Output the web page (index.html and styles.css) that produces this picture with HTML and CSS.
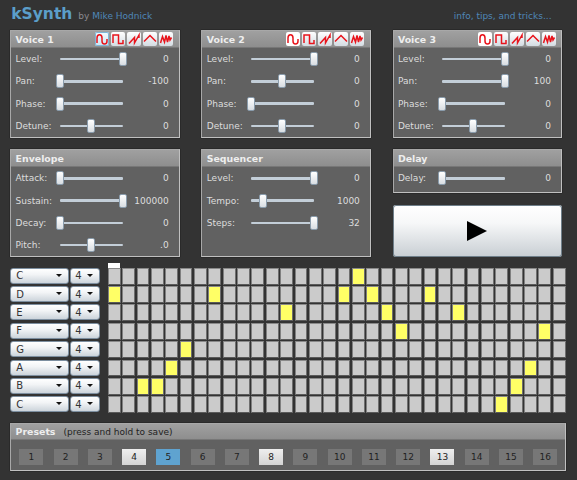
FILE: index.html
```html
<!DOCTYPE html>
<html lang="en">
<head>
<meta charset="utf-8">
<title>kSynth</title>
<link rel="stylesheet" href="styles.css">
</head>
<body>
<svg class="defs" width="0" height="0">
  <symbol id="w-sine" viewBox="0 0 14 14"><path d="M2 11V6C2 1.5 7 1.5 7 6V9C7 13 12 13 12 9V7"/></symbol>
  <symbol id="w-square" viewBox="0 0 14 14"><path d="M2 11V3H7.5V11.5H12V8"/></symbol>
  <symbol id="w-saw" viewBox="0 0 14 14"><path d="M2 11.5L7.5 5.5V11L12 3V6"/></symbol>
  <symbol id="w-tri" viewBox="0 0 14 14"><path d="M1 9.5L7 3.5L13 9.5"/></symbol>
  <symbol id="w-noise" viewBox="0 0 14 14"><path d="M1.5 11L3.5 4.5L5.5 10L7 3.5L8.5 10L10 4L11 8L12.5 5.5"/></symbol>
</svg>
<div class="app">
  <header class="top">
    <h1 class="logo">kSynth</h1>
    <span class="by">by <a class="link" href="#">Mike Hodnick</a></span>
    <a class="link tips" href="#">info, tips, and tricks...</a>
  </header>

  <div class="columns">
    <div class="col">
      <section class="panel">
        <div class="head"><span class="title">Voice 1</span>
          <div class="waves">
            <span class="wave sel"><svg><use href="#w-sine"/></svg></span><span class="wave"><svg><use href="#w-square"/></svg></span><span class="wave"><svg><use href="#w-saw"/></svg></span><span class="wave"><svg><use href="#w-tri"/></svg></span><span class="wave"><svg><use href="#w-noise"/></svg></span>
          </div>
        </div>
        <div class="row"><span class="lab">Level:</span><span class="track"><i class="thumb" style="left:100%"></i></span><span class="val">0</span></div>
        <div class="row"><span class="lab">Pan:</span><span class="track"><i class="thumb" style="left:0%"></i></span><span class="val">-100</span></div>
        <div class="row"><span class="lab">Phase:</span><span class="track"><i class="thumb" style="left:0%"></i></span><span class="val">0</span></div>
        <div class="row"><span class="lab">Detune:</span><span class="track"><i class="thumb" style="left:50%"></i></span><span class="val">0</span></div>
      </section>
      <section class="panel">
        <div class="head"><span class="title">Envelope</span></div>
        <div class="row"><span class="lab">Attack:</span><span class="track"><i class="thumb" style="left:0%"></i></span><span class="val">0</span></div>
        <div class="row"><span class="lab">Sustain:</span><span class="track"><i class="thumb" style="left:100%"></i></span><span class="val">100000</span></div>
        <div class="row"><span class="lab">Decay:</span><span class="track"><i class="thumb" style="left:0%"></i></span><span class="val">0</span></div>
        <div class="row"><span class="lab">Pitch:</span><span class="track"><i class="thumb" style="left:50%"></i></span><span class="val">.0</span></div>
      </section>
    </div>

    <div class="col">
      <section class="panel">
        <div class="head"><span class="title">Voice 2</span>
          <div class="waves">
            <span class="wave on"><svg><use href="#w-sine"/></svg></span><span class="wave"><svg><use href="#w-square"/></svg></span><span class="wave"><svg><use href="#w-saw"/></svg></span><span class="wave"><svg><use href="#w-tri"/></svg></span><span class="wave"><svg><use href="#w-noise"/></svg></span>
          </div>
        </div>
        <div class="row"><span class="lab">Level:</span><span class="track"><i class="thumb" style="left:100%"></i></span><span class="val">0</span></div>
        <div class="row"><span class="lab">Pan:</span><span class="track"><i class="thumb" style="left:50%"></i></span><span class="val">0</span></div>
        <div class="row"><span class="lab">Phase:</span><span class="track"><i class="thumb" style="left:0%"></i></span><span class="val">0</span></div>
        <div class="row"><span class="lab">Detune:</span><span class="track"><i class="thumb" style="left:50%"></i></span><span class="val">0</span></div>
      </section>
      <section class="panel grow">
        <div class="head"><span class="title">Sequencer</span></div>
        <div class="row"><span class="lab">Level:</span><span class="track"><i class="thumb" style="left:100%"></i></span><span class="val">0</span></div>
        <div class="row"><span class="lab">Tempo:</span><span class="track"><i class="thumb" style="left:20%"></i></span><span class="val">1000</span></div>
        <div class="row"><span class="lab">Steps:</span><span class="track"><i class="thumb" style="left:100%"></i></span><span class="val">32</span></div>
      </section>
    </div>

    <div class="col">
      <section class="panel">
        <div class="head"><span class="title">Voice 3</span>
          <div class="waves">
            <span class="wave on"><svg><use href="#w-sine"/></svg></span><span class="wave"><svg><use href="#w-square"/></svg></span><span class="wave"><svg><use href="#w-saw"/></svg></span><span class="wave"><svg><use href="#w-tri"/></svg></span><span class="wave"><svg><use href="#w-noise"/></svg></span>
          </div>
        </div>
        <div class="row"><span class="lab">Level:</span><span class="track"><i class="thumb" style="left:100%"></i></span><span class="val">0</span></div>
        <div class="row"><span class="lab">Pan:</span><span class="track"><i class="thumb" style="left:100%"></i></span><span class="val">100</span></div>
        <div class="row"><span class="lab">Phase:</span><span class="track"><i class="thumb" style="left:0%"></i></span><span class="val">0</span></div>
        <div class="row"><span class="lab">Detune:</span><span class="track"><i class="thumb" style="left:50%"></i></span><span class="val">0</span></div>
      </section>
      <section class="panel delay">
        <div class="head"><span class="title">Delay</span></div>
        <div class="row"><span class="lab">Delay:</span><span class="track"><i class="thumb" style="left:0%"></i></span><span class="val">0</span></div>
      </section>
      <button class="play" type="button" aria-label="Play"><span class="tri"></span></button>
    </div>
  </div>

  <div class="seq">
    <div class="pickers">
      <div class="pick"><span class="sel-box note">C<b class="arrow"></b></span><span class="sel-box oct">4<b class="arrow"></b></span></div>
      <div class="pick"><span class="sel-box note">D<b class="arrow"></b></span><span class="sel-box oct">4<b class="arrow"></b></span></div>
      <div class="pick"><span class="sel-box note">E<b class="arrow"></b></span><span class="sel-box oct">4<b class="arrow"></b></span></div>
      <div class="pick"><span class="sel-box note">F<b class="arrow"></b></span><span class="sel-box oct">4<b class="arrow"></b></span></div>
      <div class="pick"><span class="sel-box note">G<b class="arrow"></b></span><span class="sel-box oct">4<b class="arrow"></b></span></div>
      <div class="pick"><span class="sel-box note">A<b class="arrow"></b></span><span class="sel-box oct">4<b class="arrow"></b></span></div>
      <div class="pick"><span class="sel-box note">B<b class="arrow"></b></span><span class="sel-box oct">4<b class="arrow"></b></span></div>
      <div class="pick"><span class="sel-box note">C<b class="arrow"></b></span><span class="sel-box oct">4<b class="arrow"></b></span></div>
    </div>
    <div class="steps">
      <div class="playhead"></div>
      <div class="grid" id="grid">
        <i></i><i></i><i></i><i></i><i></i><i></i><i></i><i></i><i></i><i></i><i></i><i></i><i></i><i></i><i></i><i></i><i></i><i class="y"></i><i></i><i></i><i></i><i></i><i></i><i></i><i></i><i></i><i></i><i></i><i></i><i></i><i></i><i></i>
        <i class="y"></i><i></i><i></i><i></i><i></i><i></i><i></i><i class="y"></i><i></i><i></i><i></i><i></i><i></i><i></i><i></i><i></i><i class="y"></i><i></i><i class="y"></i><i></i><i></i><i></i><i class="y"></i><i></i><i></i><i></i><i></i><i></i><i></i><i></i><i></i><i></i>
        <i></i><i></i><i></i><i></i><i></i><i></i><i></i><i></i><i></i><i></i><i></i><i></i><i class="y"></i><i></i><i></i><i></i><i></i><i></i><i></i><i class="y"></i><i></i><i></i><i></i><i></i><i class="y"></i><i></i><i></i><i></i><i></i><i></i><i></i><i></i>
        <i></i><i></i><i></i><i></i><i></i><i></i><i></i><i></i><i></i><i></i><i></i><i></i><i></i><i></i><i></i><i></i><i></i><i></i><i></i><i></i><i class="y"></i><i></i><i></i><i></i><i></i><i></i><i></i><i></i><i></i><i></i><i class="y"></i><i></i>
        <i></i><i></i><i></i><i></i><i></i><i class="y"></i><i></i><i></i><i></i><i></i><i></i><i></i><i></i><i></i><i></i><i></i><i></i><i></i><i></i><i></i><i></i><i></i><i></i><i></i><i></i><i></i><i></i><i></i><i></i><i></i><i></i><i></i>
        <i></i><i></i><i></i><i></i><i class="y"></i><i></i><i></i><i></i><i></i><i></i><i></i><i></i><i></i><i></i><i></i><i></i><i></i><i></i><i></i><i></i><i></i><i></i><i></i><i></i><i></i><i></i><i></i><i></i><i></i><i class="y"></i><i></i><i></i>
        <i></i><i></i><i class="y"></i><i class="y"></i><i></i><i></i><i></i><i></i><i></i><i></i><i></i><i></i><i></i><i></i><i></i><i></i><i></i><i></i><i></i><i></i><i></i><i></i><i></i><i></i><i></i><i></i><i></i><i></i><i class="y"></i><i></i><i></i><i></i>
        <i></i><i></i><i></i><i></i><i></i><i></i><i></i><i></i><i></i><i></i><i></i><i></i><i></i><i></i><i></i><i></i><i></i><i></i><i></i><i></i><i></i><i></i><i></i><i></i><i></i><i></i><i></i><i class="y"></i><i></i><i></i><i></i><i></i>
      </div>
    </div>
  </div>

  <section class="panel presets">
    <div class="head"><span class="title">Presets</span><span class="note-text">(press and hold to save)</span></div>
    <div class="preset-row">
      <span class="pre">1</span><span class="pre">2</span><span class="pre">3</span><span class="pre saved">4</span><span class="pre cur">5</span><span class="pre">6</span><span class="pre">7</span><span class="pre saved">8</span><span class="pre">9</span><span class="pre">10</span><span class="pre">11</span><span class="pre">12</span><span class="pre saved">13</span><span class="pre">14</span><span class="pre">15</span><span class="pre">16</span>
    </div>
  </section>
</div>
</body>
</html>
```

FILE: styles.css
```css
* { box-sizing: border-box; }
html, body { margin: 0; padding: 0; }
body {
  background: #333;
  color: #ddd;
  font-family: "DejaVu Sans", Verdana, sans-serif;
  font-size: 9px;
  width: 577px;
  height: 480px;
  overflow: hidden;
}
.defs { position: absolute; }
.app { padding: 0 11.5px 0 10.3px; }

.top { height: 30px; display: flex; align-items: baseline; padding: 3px 14px 0 1px; }
.logo { margin: 0; font-size: 15.5px; font-weight: bold; color: #5b9ec9; line-height: 22px; }
.by { margin-left: 6px; font-size: 9px; color: #8a8a90; }
.link { color: #4f87b8; text-decoration: none; }
.tips { margin-left: auto; font-size: 9px; }

.columns { display: flex; justify-content: space-between; padding-right: 3.5px; }
.col { width: 169.4px; display: flex; flex-direction: column; gap: 11px; }
.grow { flex: 1; }

.panel {
  background: #616161;
  border: 1px solid #c0c0c0;
  border-top-color: #a8a8a8;
  border-left-color: #a8a8a8;
  box-shadow: 0 0 1px #000;
}
.head {
  height: 17px;
  background: linear-gradient(#a0a0a0, #8e8e8e);
  border-bottom: 1px solid #777;
  display: flex;
  align-items: center;
  padding: 0 5.5px 0 4.3px;
}
.title { font-weight: bold; font-size: 9.4px; color: #eee; }
.waves { margin-left: auto; display: flex; gap: 2px; }
.wave {
  width: 14px; height: 14px;
  border-radius: 2px;
  background: linear-gradient(#fff, #d4dce2);
  display: block;
}
.wave.sel { background: linear-gradient(#f4fbff, #cfe4f0); box-shadow: inset 0 0 0 1px #7fb6d8; }
.wave.on { background: #fff; }
.wave svg { width: 14px; height: 14px; display: block; fill: none; stroke: #e8141c; stroke-width: 1.5; }

.row { height: 22.3px; display: flex; align-items: center; padding: 0 10px 0 4.3px; }
.lab { width: 44px; flex: none; color: #ddd; }
.track {
  position: relative;
  width: 63px;
  height: 2.5px;
  flex: none;
  background: #c3ced8;
  border-radius: 1px;
}
.thumb {
  position: absolute;
  top: 50%;
  width: 8px;
  height: 14px;
  margin: -7px 0 0 -4px;
  border: 1px solid #8a9cac;
  border-radius: 2px;
  background: linear-gradient(#fff, #d8dde2);
}
.val { margin-left: auto; color: #ddd; }

.delay .row:last-child { margin-bottom: 3px; }

.play {
  height: 51.5px;
  margin-top: 1px;
  padding: 0;
  border: 0;
  border-radius: 3px;
  background: linear-gradient(#fff 0%, #f6f7f8 35%, #c8ced3 100%);
  box-shadow: 0 0 0 1px #6f7f8a inset;
  display: flex;
  align-items: center;
  justify-content: center;
}
.tri {
  width: 0; height: 0;
  border-left: 20px solid #000;
  border-top: 10.5px solid transparent;
  border-bottom: 10.5px solid transparent;
}

.seq { display: flex; margin-top: 5.7px; }
.pickers { width: 97.7px; flex: none; padding-top: 4.7px; display: grid; grid-auto-rows: 18.37px; }
.pick { display: flex; gap: 1px; height: 16px; }
.sel-box {
  position: relative;
  display: flex; align-items: center;
  height: 16px;
  padding-left: 5px;
  font-size: 10px;
  color: #333;
  border: 1px solid #7d8fa0;
  border-radius: 3px;
  background: linear-gradient(#fff, #f2f4f6 40%, #ccd4db);
}
.note { width: 59px; }
.oct { width: 30px; padding-left: 4px; }
.arrow {
  position: absolute;
  right: 6px; top: 5px;
  width: 0; height: 0;
  border-top: 3.5px solid #111;
  border-left: 3px solid transparent;
  border-right: 3px solid transparent;
}

.steps { flex: 1; }
.playhead { width: 12.3px; height: 4.7px; background: #fff; }
.grid {
  display: grid;
  grid-template-columns: repeat(32, 1fr);
  grid-auto-rows: 16.8px;
  column-gap: 1.6px;
  row-gap: 1.57px;
  width: 457.6px;
}
.grid i {
  display: block;
  background: #cbcbcb;
  border: 1px solid #6f6f6f;
  border-top-color: #8a8a8a;
  border-left-color: #808080;
  border-bottom-color: #5a5a5a;
}
.grid i.y { background: #ffff66; }

.presets { margin-top: 8.5px; height: 48px; width: 555.4px; }
.presets .head { height: 16px; }
.note-text { margin-left: 8px; color: #222; font-size: 9px; }
.preset-row { display: flex; gap: 10.27px; padding: 8.5px 0 0 8px; }
.pre {
  width: 24px; height: 16px;
  display: flex; align-items: center; justify-content: center;
  background: #777;
  color: #222;
  font-size: 9px;
}
.pre.saved { background: linear-gradient(#eee, #d4d4d4); }
.pre.cur { background: #5fa3d0; }
```
